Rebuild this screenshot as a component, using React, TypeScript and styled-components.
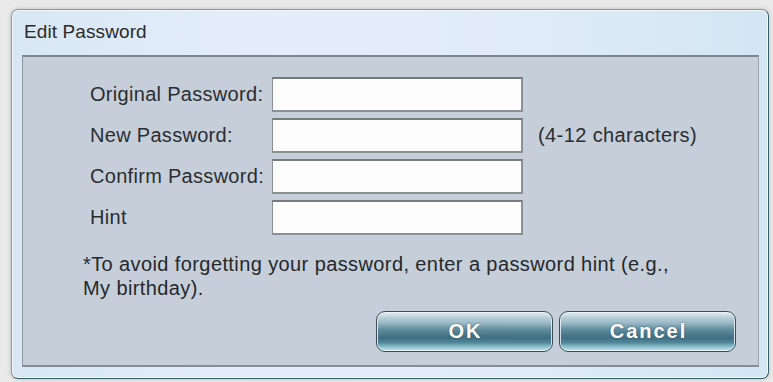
import React from "react";
import styled, { createGlobalStyle } from "styled-components";

const Global = createGlobalStyle`
  html, body { margin: 0; padding: 0; }
  body {
    background: #e9e9e9;
    font-family: "Liberation Sans", Arial, sans-serif;
    width: 773px;
    height: 382px;
    overflow: hidden;
  }
`;

const Page = styled.div`
  padding: 9px 4px 3px 11px;
`;

const Window = styled.div`
  width: 758px;
  height: 370px;
  box-sizing: border-box;
  border: 1px solid #8e979d;
  border-right-color: #365f6a;
  border-bottom-color: #365f6a;
  border-radius: 7px;
  background: linear-gradient(90deg, #d9e7f4 0%, #e4eefa 35%, #dfebf7 70%, #d3e6f3 100%);
  box-shadow: 0 0 4px rgba(0, 0, 0, 0.18), inset 0 0 0 1px #f2f8fd;
  display: flex;
  flex-direction: column;
  padding: 0 9px 11px 10px;
`;

const TitleBar = styled.div`
  height: 45px;
  display: flex;
  align-items: center;
  padding-left: 2px;
  font-size: 19px;
  color: #2b2b2b;
  letter-spacing: 0.1px;
  padding-bottom: 1px;
  box-sizing: border-box;
`;

const Panel = styled.div`
  flex: 1;
  background: #c6cfd9;
  border-top: 2px solid #7c868f;
  border-left: 1px solid #8c959d;
  border-right: 1px solid #9aa3ab;
  border-bottom: 2px solid #858e97;
  padding: 20px 22px 13px 67px;
  display: flex;
  flex-direction: column;
  box-sizing: border-box;
`;

const Form = styled.div`
  display: grid;
  grid-template-columns: 182px 251px auto;
  grid-auto-rows: 35px;
  row-gap: 6px;
  align-items: center;
`;

const Label = styled.label`
  font-size: 20px;
  color: #2a2d31;
  letter-spacing: 0.3px;
  white-space: nowrap;
`;

const Input = styled.input`
  height: 35px;
  box-sizing: border-box;
  background: #fdfdfd;
  border: 2px solid #8b9096;
  border-top-color: #767b80;
  border-left-width: 1px;
  padding: 0 3px;
  margin: 0;
  font-size: 20px;
  outline: none;
  caret-color: #111;
`;

const Hint = styled.span`
  font-size: 20px;
  color: #2a2d31;
  letter-spacing: 0.4px;
  padding-left: 15px;
  white-space: nowrap;
`;

const Note = styled.p`
  margin: 17px 0 0 -7px;
  font-size: 20px;
  line-height: 24px;
  color: #25282c;
  letter-spacing: 0.4px;
  white-space: nowrap;
`;

const Buttons = styled.div`
  margin-top: auto;
  display: flex;
  justify-content: flex-end;
  gap: 6px;
`;

const Button = styled.button`
  width: 177px;
  height: 41px;
  box-sizing: border-box;
  border: 1px solid #3e4d57;
  border-radius: 9px;
  background: linear-gradient(
    180deg,
    #e4eff4 0%,
    #b9d0da 14%,
    #9ab9c6 28%,
    #5d8a9b 46%,
    #3f6f81 66%,
    #4f8597 78%,
    #8dc2d1 90%,
    #c9e4ec 100%
  );
  box-shadow: inset 0 0 0 1px rgba(235, 245, 249, 0.85);
  color: #ffffff;
  font-family: "Liberation Sans", Arial, sans-serif;
  font-weight: bold;
  font-size: 20px;
  letter-spacing: 2px;
  text-shadow: 0 0 2px rgba(30, 60, 75, 0.6);
  padding: 0 0 0 2px;
  cursor: pointer;
`;

const fields = [
  { label: "Original Password:", extra: "" },
  { label: "New Password:", extra: "(4-12 characters)" },
  { label: "Confirm Password:", extra: "" },
  { label: "Hint", extra: "" },
];

export default function App() {
  return (
    <>
      <Global />
      <Page>
        <Window>
          <TitleBar>Edit Password</TitleBar>
          <Panel>
            <Form>
              {fields.map((f, i) => (
                <React.Fragment key={f.label}>
                  <Label>{f.label}</Label>
                  <Input
                    type={f.label === "Hint" ? "text" : "password"}
                    autoFocus={i === 0}
                  />
                  <Hint>{f.extra}</Hint>
                </React.Fragment>
              ))}
            </Form>
            <Note>
              *To avoid forgetting your password, enter a password hint (e.g.,
              <br />
              My birthday).
            </Note>
            <Buttons>
              <Button>OK</Button>
              <Button>Cancel</Button>
            </Buttons>
          </Panel>
        </Window>
      </Page>
    </>
  );
}
